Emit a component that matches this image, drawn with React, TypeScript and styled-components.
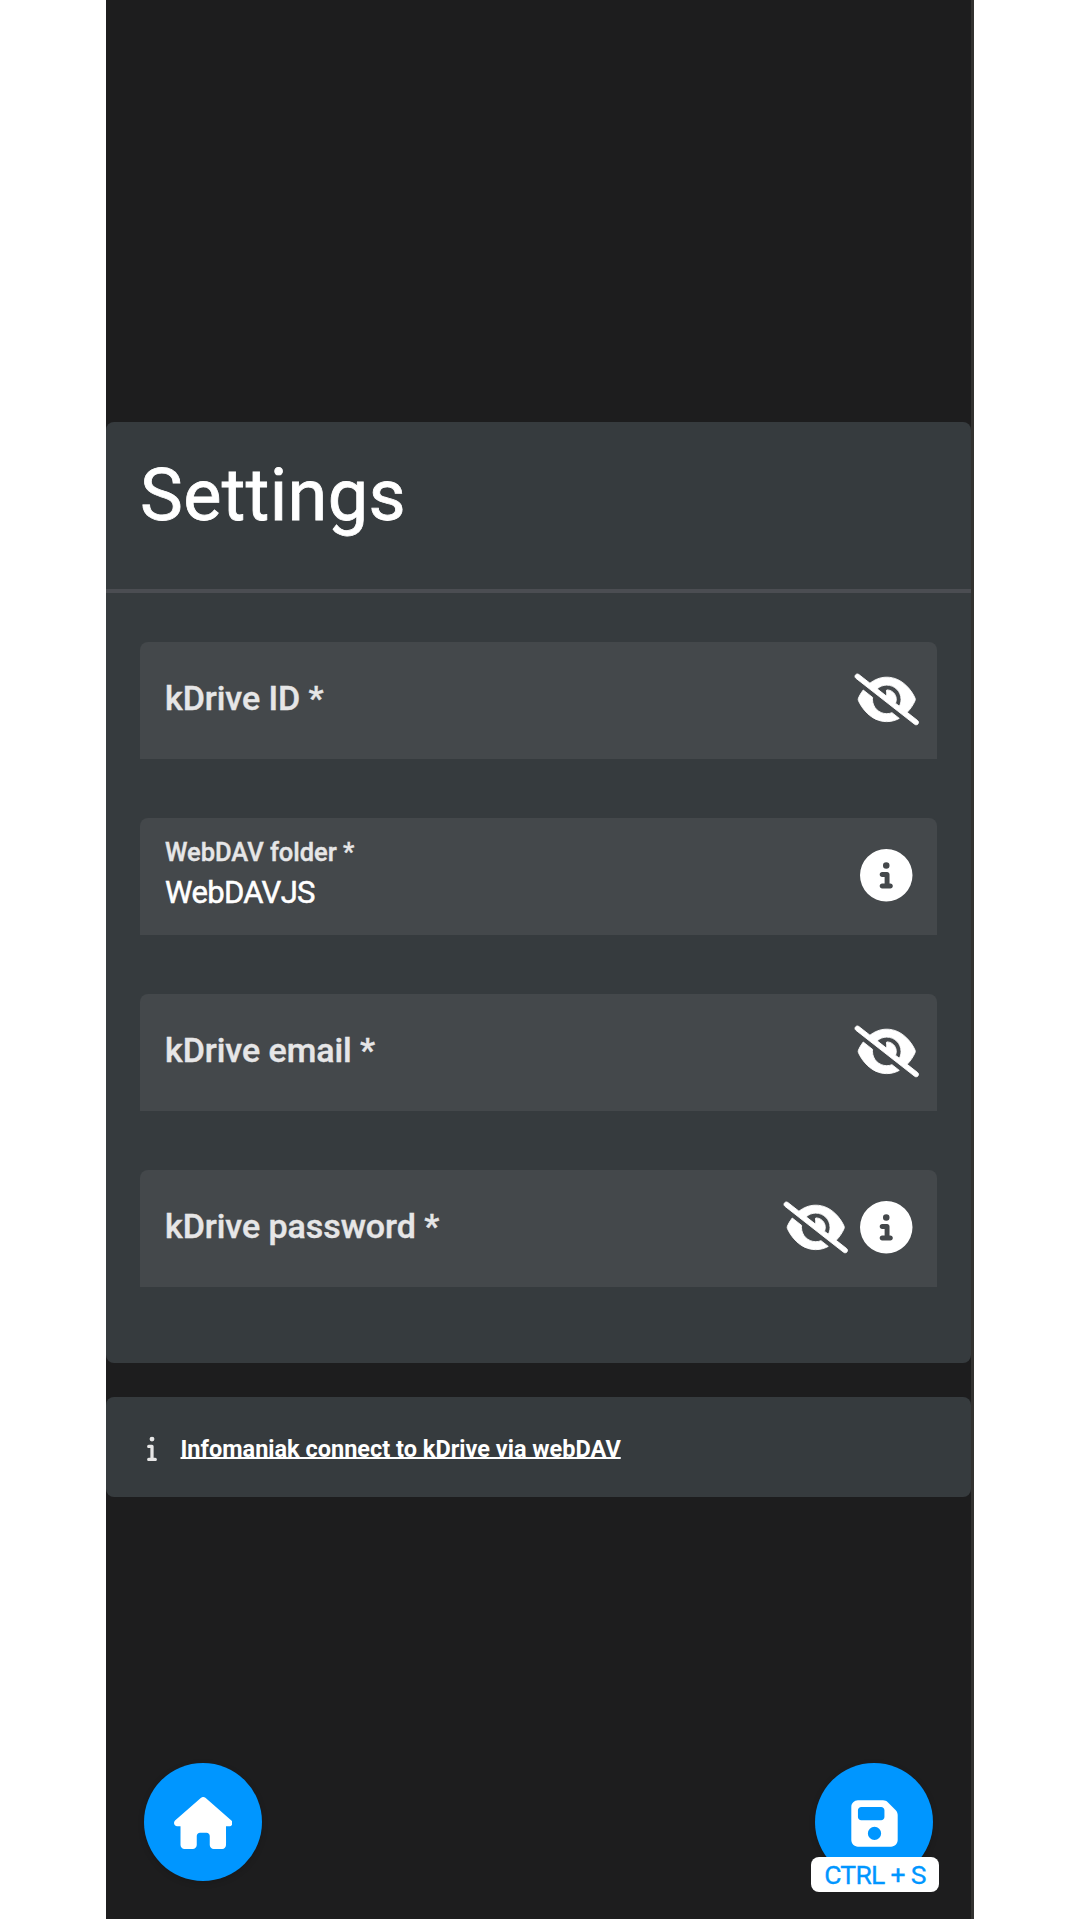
import React from 'react';
import styled, { createGlobalStyle } from 'styled-components';
import { FaEyeSlash, FaCircleInfo, FaInfo, FaHouse, FaFloppyDisk } from 'react-icons/fa6';

const GlobalStyle = createGlobalStyle`
  * { box-sizing: border-box; }
  body {
    margin: 0;
    background: #fff;
    font-family: Roboto, "Liberation Sans", sans-serif;
    color: #fff;
  }
  svg { display: block; flex: none; }
`;

const Screen = styled.main`
  display: flex;
  flex-direction: column;
  width: 868px;
  height: 1919px;
  margin-left: 106px;
  padding-top: 422px;
  background: #1d1d1e;
  border-right: 3px solid #333230;
`;

const Card = styled.section`
  height: 941px;
  border-radius: 8px;
  background: #363b3e;
`;

const CardHeader = styled.header`
  height: 170.5px;
  padding: 31px 34px 0;
  border-bottom: 4px solid #4b4d52;
`;

const Title = styled.h1`
  margin: 0;
  font-size: 72px;
  line-height: 85px;
  font-weight: 400;
  letter-spacing: 0.4px;
  -webkit-text-stroke: 0.8px #fff;
`;

const Form = styled.form`
  display: flex;
  flex-direction: column;
  gap: 58.8px;
  padding: 49.3px 34px 0;
`;

const Field = styled.label`
  display: flex;
  align-items: center;
  justify-content: space-between;
  height: 117.3px;
  padding: 0 17px 0 25px;
  border-radius: 8px 8px 0 0;
  background: #44484b;
`;

const FieldText = styled.span`
  display: flex;
  flex-direction: column;
`;

const Label = styled.span<{ $floating?: boolean }>`
  font-size: ${(p) => (p.$floating ? '25.5px' : '34px')};
  line-height: ${(p) => (p.$floating ? '32px' : '40px')};
  font-weight: 500;
  letter-spacing: ${(p) => (p.$floating ? '-0.03px' : '-0.06px')};
  color: #e6e6e7;
  -webkit-text-stroke: 0.4px #e6e6e7;
  margin-top: -5px;
`;

const Value = styled.span`
  font-size: 31px;
  line-height: 40px;
  margin-top: 5px;
  letter-spacing: -0.65px;
  -webkit-text-stroke: 0.5px #fff;
`;

const Icons = styled.span`
  display: flex;
  align-items: center;
  gap: 4px;
  margin-top: -2px;
`;

const IconSlot = styled.span`
  display: flex;
  justify-content: center;
  width: 67px;
  font-size: 52.5px;
`;

const EyeIcon = styled(FaEyeSlash)`
  width: 63.5px;
  height: 50.8px;
  stroke: currentColor;
  stroke-width: 9px;
  overflow: visible;
`;

const HouseIcon = styled(FaHouse)`
  width: 58.5px;
  height: 52px;
`;

const LinkCard = styled.section`
  display: flex;
  align-items: center;
  height: 100px;
  margin-top: 34px;
  padding: 3px 0 0 34px;
  border-radius: 8px;
  background: #363b3e;
  font-size: 26px;
`;

const InfoSlot = styled.span`
  display: flex;
  justify-content: center;
  width: 23px;
  margin: -2px 17.5px 0 0;
  color: #e6e6e6;
`;

const DocLink = styled.a`
  font-size: 23.5px;
  line-height: 30px;
  font-weight: 700;
  color: #fff;
  text-decoration: underline;
  text-decoration-thickness: 2px;
  text-underline-offset: 0;
  text-decoration-skip-ink: none;
`;

const Actions = styled.nav`
  display: flex;
  justify-content: space-between;
  margin-top: auto;
  padding: 0 38px 37.6px 38px;
`;

const RoundButton = styled.button`
  position: relative;
  display: flex;
  align-items: center;
  justify-content: center;
  width: 118px;
  height: 118px;
  padding: 2px 0 0;
  border: 0;
  border-radius: 50%;
  background: #0096ff;
  color: #fff;
  font-size: 53px;
  font-family: inherit;
  box-shadow: 0 2px 6px rgba(0, 0, 0, 0.15);
`;

const Shortcut = styled.span`
  position: absolute;
  top: 94px;
  left: -4px;
  width: 128px;
  height: 35px;
  border-radius: 8px;
  background: #fff;
  color: #0096ff;
  font-size: 26.5px;
  line-height: 35px;
  letter-spacing: -0.7px;
  text-align: center;
  white-space: nowrap;
  -webkit-text-stroke: 0.3px #0096ff;
`;

type FieldSpec = { label: string; value?: string; secret?: boolean; info?: boolean };

const fields: FieldSpec[] = [
  { label: 'kDrive ID *', secret: true },
  { label: 'WebDAV folder *', value: 'WebDAVJS', info: true },
  { label: 'kDrive email *', secret: true },
  { label: 'kDrive password *', secret: true, info: true },
];

export default function App() {
  return (
    <>
      <GlobalStyle />
      <Screen>
        <Card>
          <CardHeader>
            <Title>Settings</Title>
          </CardHeader>
          <Form>
            {fields.map((f) => (
              <Field key={f.label}>
                <FieldText>
                  <Label $floating={!!f.value}>{f.label}</Label>
                  {f.value && <Value>{f.value}</Value>}
                </FieldText>
                <Icons>
                  {f.secret && <IconSlot><EyeIcon /></IconSlot>}
                  {f.info && <IconSlot><FaCircleInfo /></IconSlot>}
                </Icons>
              </Field>
            ))}
          </Form>
        </Card>
        <LinkCard>
          <InfoSlot><FaInfo /></InfoSlot>
          <DocLink>Infomaniak connect to kDrive via webDAV</DocLink>
        </LinkCard>
        <Actions>
          <RoundButton type="button"><HouseIcon /></RoundButton>
          <RoundButton type="button">
            <FaFloppyDisk />
            <Shortcut>CTRL + S</Shortcut>
          </RoundButton>
        </Actions>
      </Screen>
    </>
  );
}
